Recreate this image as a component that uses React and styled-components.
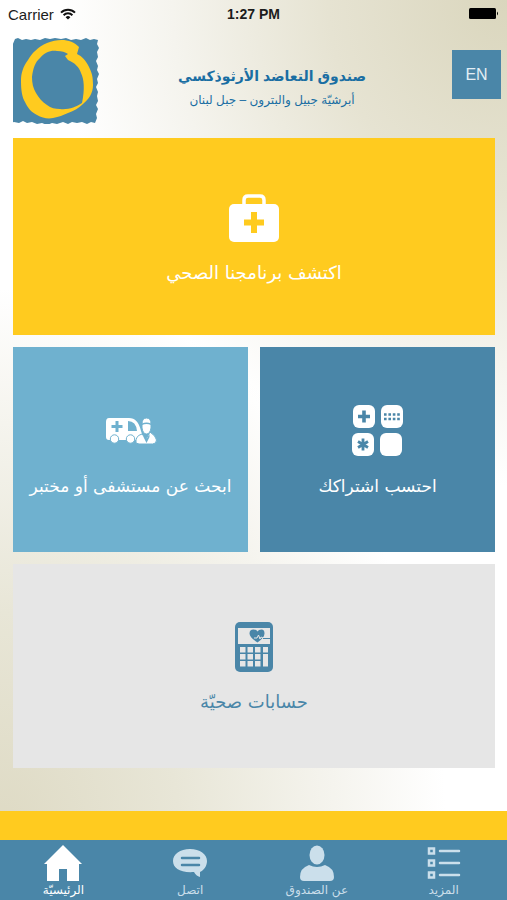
import { useState } from 'react';
import styled, { createGlobalStyle, css } from 'styled-components';

const colors = {
  blue: '#4a86a8',
  lightBlue: '#6fb1cf',
  yellow: '#ffcb1f',
  grey: '#e6e6e6',
  tabIdle: '#cbdfeb',
  title: '#1a6ea3',
};

const GlobalStyle = createGlobalStyle`
  * {
    box-sizing: border-box;
  }

  body {
    margin: 0;
    font-family: "Liberation Sans", "DejaVu Sans", sans-serif;
  }
`;

const Screen = styled.div`
  display: flex;
  flex-direction: column;
  min-height: 100vh;
  background:
    radial-gradient(ellipse 88% 54% at 100% 0, #dad6bd 0%, #e6e3d2 40%, #f5f4ee 75%, transparent 100%),
    radial-gradient(ellipse 88% 60% at 0 92%, #dedac4 0%, #e8e6d7 40%, #f5f4ee 75%, transparent 100%),
    #fff;
`;

const StatusBar = styled.div`
  display: grid;
  grid-template-columns: 1fr auto 1fr;
  align-items: center;
  height: 28px;
  padding: 0 8px;
  font-size: 14px;
  color: #1c1c1c;
`;

const Carrier = styled.span`
  display: flex;
  align-items: center;
  gap: 6px;
  font-size: 15px;
`;

const Clock = styled.span`
  font-weight: bold;
`;

const Battery = styled.svg`
  justify-self: end;
`;

const Header = styled.header`
  display: flex;
  align-items: center;
  justify-content: space-between;
  height: 110px;
  padding: 0 6px 5px 13px;
`;

const Heading = styled.div`
  margin: 14px 8px 0 0;
  text-align: center;
  color: ${colors.title};
`;

const Title = styled.h1`
  margin: 0;
  font-size: 14px;
  line-height: 24px;
`;

const Subtitle = styled.p`
  margin: 0;
  font-size: 12px;
  line-height: 24px;
`;

const LanguageButton = styled.button`
  width: 49px;
  height: 49px;
  margin-bottom: 12px;
  padding: 0;
  border: 0;
  background: ${colors.blue};
  color: #e3eef5;
  font: 16px "Liberation Sans", sans-serif;
  cursor: pointer;
`;

const Tiles = styled.main`
  display: grid;
  grid-template-columns: 1fr 1fr;
  gap: 12px;
  flex: 1;
  padding: 0 12px 43px 13px;
`;

const Tile = styled.button`
  display: flex;
  flex-direction: column;
  align-items: center;
  justify-content: center;
  gap: 15px;
  min-height: 204px;
  padding: 18px 12px 12px;
  border: 0;
  background: ${({ $background }) => $background};
  color: ${({ $color }) => $color || '#fff'};
  font: 17px "DejaVu Sans", sans-serif;
  line-height: 28px;
  cursor: pointer;
  ${({ $wide }) => $wide && css`
    grid-column: 1 / -1;
    font-size: 18px;
  `}

  &:first-child {
    min-height: 197px;
  }
`;

const TileIcon = styled.span`
  display: flex;
  align-items: center;
  height: 52px;
`;

const Stripe = styled.div`
  height: 29px;
  background: ${colors.yellow};
`;

const TabBar = styled.nav`
  display: grid;
  grid-template-columns: repeat(4, 1fr);
  height: 60px;
  background: ${colors.blue};
`;

const Tab = styled.button`
  display: flex;
  flex-direction: column;
  align-items: center;
  padding: 4px 0 0;
  border: 0;
  background: none;
  color: ${({ $active }) => ($active ? '#fff' : colors.tabIdle)};
  font: 12px "DejaVu Sans", sans-serif;
  line-height: 16px;
  cursor: pointer;
`;

const WifiIcon = () => (
  <svg width="16" height="12" viewBox="0 0 16 12" fill="none" stroke="#111" strokeWidth="2">
    <path d="M1 4.6a10 10 0 0 1 14 0M3.6 7.2a6.2 6.2 0 0 1 8.8 0" />
    <path d="M8 11.6L5.6 9.2a3.4 3.4 0 0 1 4.8 0z" fill="#111" stroke="none" />
  </svg>
);

const BatteryIcon = () => (
  <Battery width="30" height="12" viewBox="0 0 30 12" fill="#000">
    <rect width="27" height="11" rx="1.5" />
    <path d="M28 3.5q2 2 0 4z" />
  </Battery>
);

const Logo = () => (
  <svg width="87" height="87" viewBox="0 0 87 87" role="img" aria-label="صندوق التعاضد">
    <path
      fill={colors.blue}
      d="M2 2l3-1 4 2 4-1 5 1 4-1 5 1 5-2 5 1 5-1 6 1 5-1 5 2 5-1 5 1 5-2 4 2 4-1 4 1-1 4 2 4-2 4 1 5-2 4 2 5-1 4 2 4-2 5 1 4-2 4 2 5-1 4 1 5-2 4 2 4-2 5 1 4-2 5-4-1-4 2-5-2-5 1-5-1-4 2-5-2-6 2-5-1-5 2-5-2-5 1-5-2-5 1-4-2-4 2-5-1-4 1 1-5-2-4 2-4-2-5 2-4-1-5 2-5-2-4 1-5-1-4 2-4-2-5 1-5-2-4 2-5-1-4 2-5z"
    />
    <path
      fill={colors.yellow}
      d="M66 10C59 2 46 1 34 6C25 10 19 16 15 23C10 30 8 36 8 44C8 53 9 60 12 65C15 71 18 75 24 78C29 81 35 82 40 81C46 80 50 78 55 76C61 74 66 71 70 67C76 62 80 56 80 48C80 40 79 36 76 30C73 24 69 19 64 17zM55 17L52 19L55 23C62 26 66 30 68 36C71 42 72 52 69 66C63 70 55 73 47 72C42 72 38 71 34 68C29 65 26 61 23 56C20 51 19 46 19 40C20 32 22 25 27 21C32 15 38 13 44 14C49 14 52 15 55 17z"
      fillRule="evenodd"
    />
  </svg>
);

const KitIcon = () => (
  <svg width="50" height="48" viewBox="0 0 50 48">
    <path d="M15 11V6q0-4 4-4h12q4 0 4 4v5" fill="none" stroke="currentColor" strokeWidth="3.5" />
    <rect y="10" width="50" height="38" rx="5" fill="currentColor" />
    <path d="M22 18h6v7.5h7v6h-7V39h-6v-7.5h-7v-6h7z" fill={colors.yellow} />
  </svg>
);

const AmbulanceIcon = () => (
  <svg width="52" height="28" viewBox="0 0 52 28" fill="currentColor">
    <path d="M4 1h20q9 0 12 13l3 9H4q-3 0-3-3V5q0-4 3-4z" />
    <path d="M10.500 4h3v4h4v3h-4v4h-3v-4h-4V8h4zM23 4q8 0 9 10h-9z" fill={colors.lightBlue} />
    <g stroke={colors.lightBlue} strokeWidth="1">
      <circle cx="9.5" cy="22" r="4.2" />
      <circle cx="25.5" cy="22" r="4.2" />
      <path d="M31 26q-1-7 6-9l4 5 4-7q6 4 6.500 8 0 4-4 4H34z" />
      <path d="M37 7q0-6 4.500-6T46 7v4q-1 6-4.500 6T37 11z" />
    </g>
    <path d="M37 6.500q4.500-2 9 0V8q-4.500-2-9 0zM39 18l2.500 4 3-5v3l-3 6-3-6z" fill={colors.lightBlue} />
  </svg>
);

const KeypadIcon = () => (
  <svg width="52" height="52" viewBox="0 0 52 52" fill="currentColor">
    <rect x="1" y="0" width="22" height="23" rx="6" />
    <rect x="29" y="0" width="22" height="23" rx="6" />
    <rect x="0" y="28" width="22" height="23" rx="6" />
    <rect x="28" y="28" width="22" height="23" rx="6" />
    <g stroke={colors.blue} fill="none">
      <path d="M12 5.5v12M6 11.5h12" strokeWidth="3.6" />
      <path d="M11 33.5v12M6 36.5l10 6M16 36.5l-10 6" strokeWidth="2.800" />
      <path d="M32 9.5h16M32 14h16" strokeWidth="2.600" strokeDasharray="2.600 1.800" />
    </g>
  </svg>
);

const CalculatorIcon = () => (
  <svg width="38" height="50" viewBox="0 0 38 50">
    <rect width="38" height="50" rx="5" fill="currentColor" />
    <g fill={colors.grey}>
      <path d="M3 6h32v16H3z" />
      {[25, 32, 39].map((y) => (
        <path key={y} d={`M5 ${y}h5.500v5.500H5zM12.500 ${y}h5.500v5.500h-5.500zM20 ${y}h5.500v5.500h-5.500z`} />
      ))}
      <path d="M28 25h5v5.500h-5zM28 32h5v12.500h-5z" />
    </g>
    <path d="M22.500 20.500q-8-5-8-9 0-4 4-4 3 0 4 2 1-2 4-2 3 0 3 4 0 4-7 9z" fill="currentColor" />
    <path d="M19 16h3l1.500-3 1.500 4 1-2 2 1h2" fill="none" stroke={colors.grey} strokeWidth="1" />
    <path d="M28 16.500h7" stroke="currentColor" strokeWidth="1" />
  </svg>
);

const HomeIcon = () => (
  <svg width="38" height="38" viewBox="0 0 38 38" fill="currentColor">
    <path d="M19 1L0 20h3v17h12V25h8v12h12V20h3z" />
  </svg>
);

const ChatIcon = () => (
  <svg width="36" height="38" viewBox="0 0 36 38">
    <path d="M18 5c10 0 17 5 17 12 0 5-3 9-7 11v5q-4-1-6-5c-14 1-21-4-21-11C1 10 8 5 18 5z" fill="currentColor" />
    <path d="M10 14h17M10 21h17" stroke={colors.blue} strokeWidth="2.500" strokeLinecap="round" />
  </svg>
);

const PersonIcon = () => (
  <svg width="34" height="38" viewBox="0 0 34 38" fill="currentColor">
    <ellipse cx="17" cy="11" rx="7.500" ry="9.500" />
    <path d="M9 21q8 4 16 0 9 3 9 12 0 4-4 4H4q-4 0-4-4 0-9 9-12z" />
  </svg>
);

const ListIcon = () => (
  <svg width="34" height="38" viewBox="0 0 34 38" fill="none" stroke="currentColor">
    {[7, 19, 31].map((y) => (
      <g key={y}>
        <rect x="2" y={y - 2.5} width="5" height="5" strokeWidth="2.500" />
        <path d={`M13 ${y}h19`} strokeWidth="2.500" strokeLinecap="round" />
      </g>
    ))}
  </svg>
);

const tiles = [
  { label: 'اكتشف برنامجنا الصحي', Icon: KitIcon, background: colors.yellow, wide: true },
  { label: 'احتسب اشتراكك', Icon: KeypadIcon, background: colors.blue },
  { label: 'ابحث عن مستشفى أو مختبر', Icon: AmbulanceIcon, background: colors.lightBlue },
  { label: 'حسابات صحيّة', Icon: CalculatorIcon, background: colors.grey, color: colors.blue, wide: true },
];

const tabs = [
  { id: 'more', label: 'المزيد', Icon: ListIcon },
  { id: 'about', label: 'عن الصندوق', Icon: PersonIcon },
  { id: 'contact', label: 'اتصل', Icon: ChatIcon },
  { id: 'home', label: 'الرئيسيّة', Icon: HomeIcon },
];

function App() {
  const [activeTab, setActiveTab] = useState('home');

  return (
    <Screen>
      <GlobalStyle />
      <StatusBar>
        <Carrier>Carrier <WifiIcon /></Carrier>
        <Clock>1:27 PM</Clock>
        <BatteryIcon />
      </StatusBar>
      <Header>
        <Logo />
        <Heading dir="rtl">
          <Title>صندوق التعاضد الأرثوذكسي</Title>
          <Subtitle>أبرشيّة جبيل والبترون – جبل لبنان</Subtitle>
        </Heading>
        <LanguageButton>EN</LanguageButton>
      </Header>
      <Tiles dir="rtl">
        {tiles.map(({ label, Icon, background, color, wide }) => (
          <Tile key={label} $background={background} $color={color} $wide={wide}>
            <TileIcon><Icon /></TileIcon>
            {label}
          </Tile>
        ))}
      </Tiles>
      <Stripe />
      <TabBar dir="rtl">
        {tabs.map(({ id, label, Icon }) => (
          <Tab key={id} $active={id === activeTab} onClick={() => setActiveTab(id)}>
            <Icon />
            {label}
          </Tab>
        ))}
      </TabBar>
    </Screen>
  );
}

export default App;
